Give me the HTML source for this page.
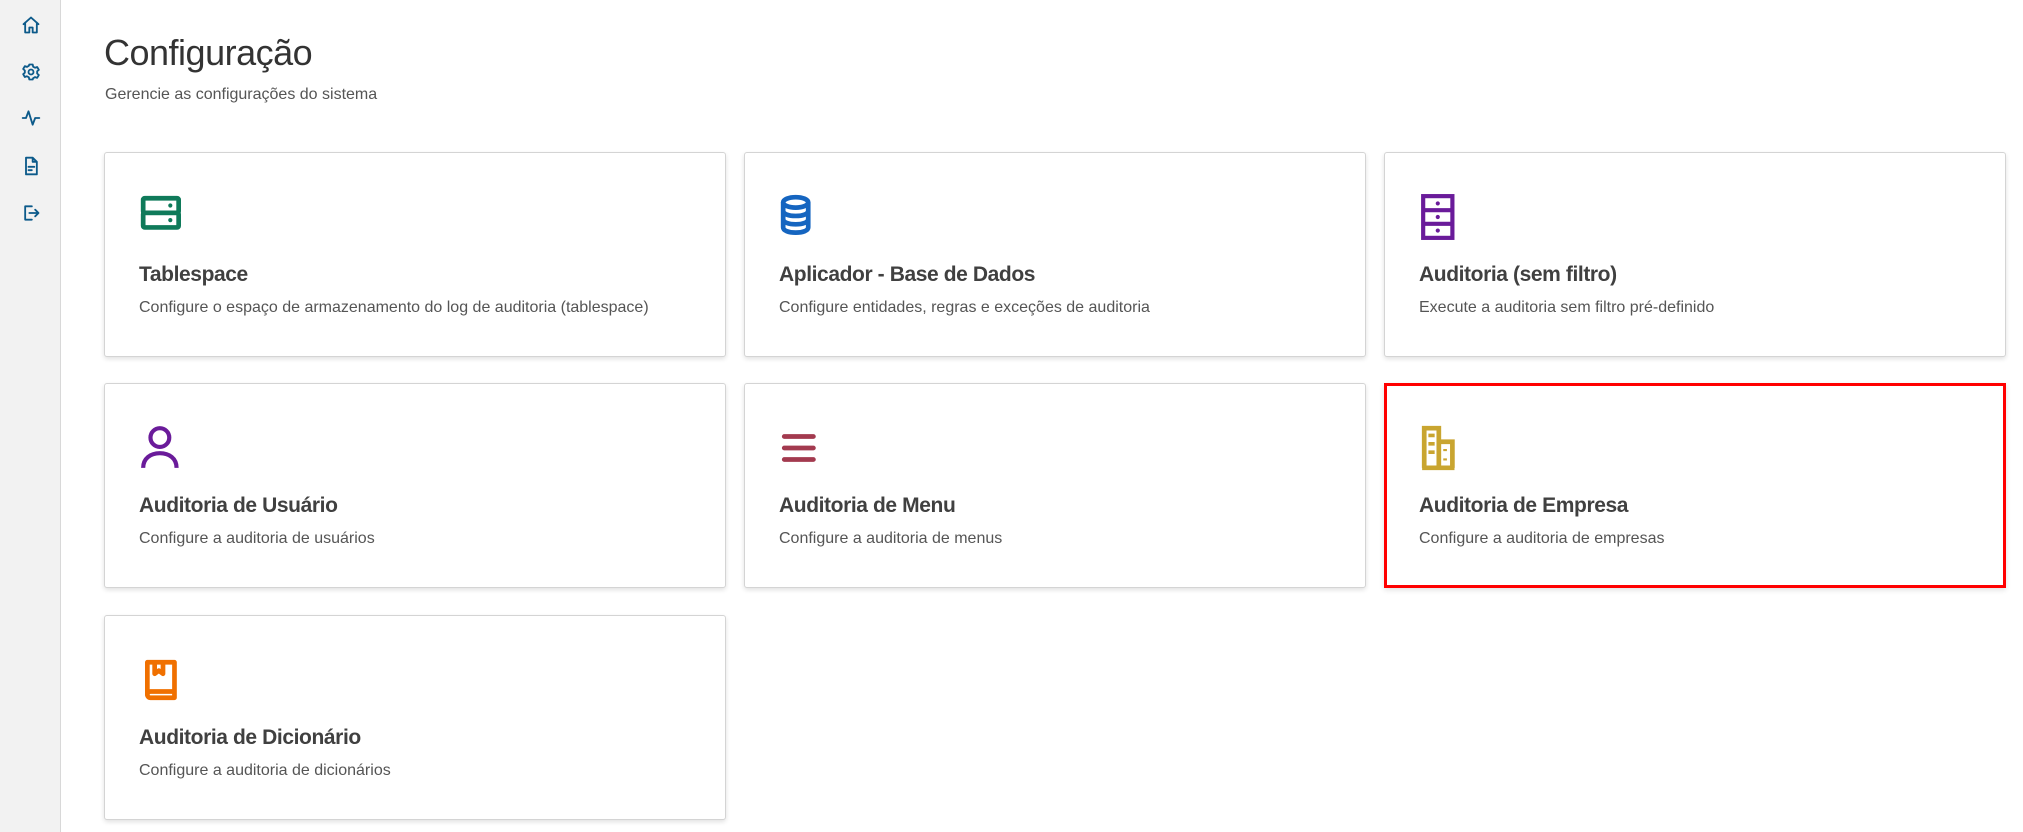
<!DOCTYPE html>
<html><head><meta charset="utf-8"><style>
*{margin:0;padding:0;box-sizing:border-box}
body{width:2023px;height:832px;background:#fff;font-family:"Liberation Sans",sans-serif;position:relative;overflow:hidden;color:#3a3a3a}
.side{position:absolute;left:0;top:0;width:61px;height:832px;background:#f2f2f2;border-right:1px solid #d8d8d8}
.side svg{position:absolute;left:21px;width:20px;height:20px;fill:none;stroke:#0c5a8a;stroke-width:2.2;stroke-linecap:round;stroke-linejoin:round}
h1{position:absolute;left:104px;top:32px;font-size:36px;font-weight:normal;color:#333;letter-spacing:-0.5px}
.sub{position:absolute;left:105px;top:86px;font-size:16px;color:#555}
.card{position:absolute;width:622px;height:205px;background:#fff;border:1px solid #d4d4d4;border-radius:3px;box-shadow:0 2px 5px rgba(0,0,0,.12)}
.card svg{position:absolute;left:34px;top:40px;width:48px;height:48px}
.card .t{position:absolute;left:34px;top:110px;font-size:21px;font-weight:bold;color:#404040;letter-spacing:-0.4px}
.card .d{position:absolute;left:34px;top:146px;font-size:16px;color:#555}
.sel{border:3px solid #f00;border-radius:0}
.sel svg{left:32px;top:38px}.sel .t{left:32px;top:108px}.sel .d{left:32px;top:144px}
</style></head><body>
<div class="side">
<svg style="top:15px" viewBox="0 0 24 24"><path d="M3 11l9-8 9 8M5 9v12h5v-6h4v6h5V9"/></svg>
<svg style="top:62px" viewBox="0 0 24 24"><circle cx="12" cy="12" r="3"/><path d="M10 3h4l.6 2.6 2.3 1.3 2.5-.9 2 3.4-2 1.8v2.6l2 1.8-2 3.4-2.5-.9-2.3 1.3L14 21h-4l-.6-2.6-2.3-1.3-2.5.9-2-3.4 2-1.8v-2.6l-2-1.8 2-3.4 2.5.9 2.3-1.3z"/></svg>
<svg style="top:108px" viewBox="0 0 24 24"><path d="M2 12h4l3-8 5 16 3-8h5"/></svg>
<svg style="top:156px" viewBox="0 0 24 24"><path d="M6 2h8l5 5v15H6zM14 2v5h5M9 13h7M9 17h4"/></svg>
<svg style="top:203px" viewBox="0 0 24 24"><path d="M13 4H5v16h8M10 12h11M17 8l4 4-4 4"/></svg>
</div>
<h1>Configuração</h1>
<div class="sub">Gerencie as configurações do sistema</div>

<div class="card" style="left:104px;top:152px">
<svg viewBox="0 0 46 46" fill="none" stroke="#0f7a5a" stroke-width="4.5"><rect x="4" y="5" width="34" height="14" rx="1.5"/><rect x="4" y="19" width="34" height="14" rx="1.5"/><circle cx="30" cy="12" r="2" fill="#0f7a5a" stroke="none"/><circle cx="30" cy="26" r="2" fill="#0f7a5a" stroke="none"/></svg>
<div class="t">Tablespace</div><div class="d">Configure o espaço de armazenamento do log de auditoria (tablespace)</div></div>

<div class="card" style="left:744px;top:152px">
<svg viewBox="0 0 46 46" fill="none" stroke="#1565c0" stroke-width="4.5"><ellipse cx="16" cy="9" rx="12" ry="5"/><path d="M4 9v24c0 3 5 5 12 5s12-2 12-5V9M4 17c0 3 5 5 12 5s12-2 12-5M4 25c0 3 5 5 12 5s12-2 12-5"/></svg>
<div class="t">Aplicador - Base de Dados</div><div class="d">Configure entidades, regras e exceções de auditoria</div></div>

<div class="card" style="left:1384px;top:152px">
<svg viewBox="0 0 46 46" fill="none" stroke="#6a1b9a" stroke-width="4"><rect x="4" y="3" width="28" height="40"/><path d="M4 16.5h28M4 29.5h28"/><circle cx="18" cy="10" r="2" fill="#6a1b9a" stroke="none"/><circle cx="18" cy="23" r="2" fill="#6a1b9a" stroke="none"/><circle cx="18" cy="36" r="2" fill="#6a1b9a" stroke="none"/></svg>
<div class="t">Auditoria (sem filtro)</div><div class="d">Execute a auditoria sem filtro pré-definido</div></div>

<div class="card" style="left:104px;top:383px">
<svg viewBox="0 0 46 46" fill="none" stroke="#6a1b9a" stroke-width="4"><circle cx="20" cy="13" r="9"/><path d="M4 42c0-9 7-14 16-14s16 5 16 14"/></svg>
<div class="t">Auditoria de Usuário</div><div class="d">Configure a auditoria de usuários</div></div>

<div class="card" style="left:744px;top:383px">
<svg viewBox="0 0 46 46" fill="none" stroke="#a33a4f" stroke-width="4.5" stroke-linecap="round"><path d="M5 12h28M5 23h28M5 34h28"/></svg>
<div class="t">Auditoria de Menu</div><div class="d">Configure a auditoria de menus</div></div>

<div class="card sel" style="left:1384px;top:383px">
<svg viewBox="0 0 46 46" fill="none" stroke="#c9a530" stroke-width="4.5"><path d="M5 42V4h14v38M19 42V17h13v25M3 42h31"/><path d="M9 11h6M9 19h6M9 27h6M25 24v2M25 33v2" stroke-width="3.5"/></svg>
<div class="t">Auditoria de Empresa</div><div class="d">Configure a auditoria de empresas</div></div>

<div class="card" style="left:104px;top:615px">
<svg viewBox="0 0 46 46" fill="none" stroke="#f07000" stroke-width="4.5" stroke-linejoin="round"><path d="M8 38V6h26v34H11a3 3 0 0 1 0-6h23"/><path d="M15 6v11l4-3 4 3V6"/></svg>
<div class="t">Auditoria de Dicionário</div><div class="d">Configure a auditoria de dicionários</div></div>
</body></html>
